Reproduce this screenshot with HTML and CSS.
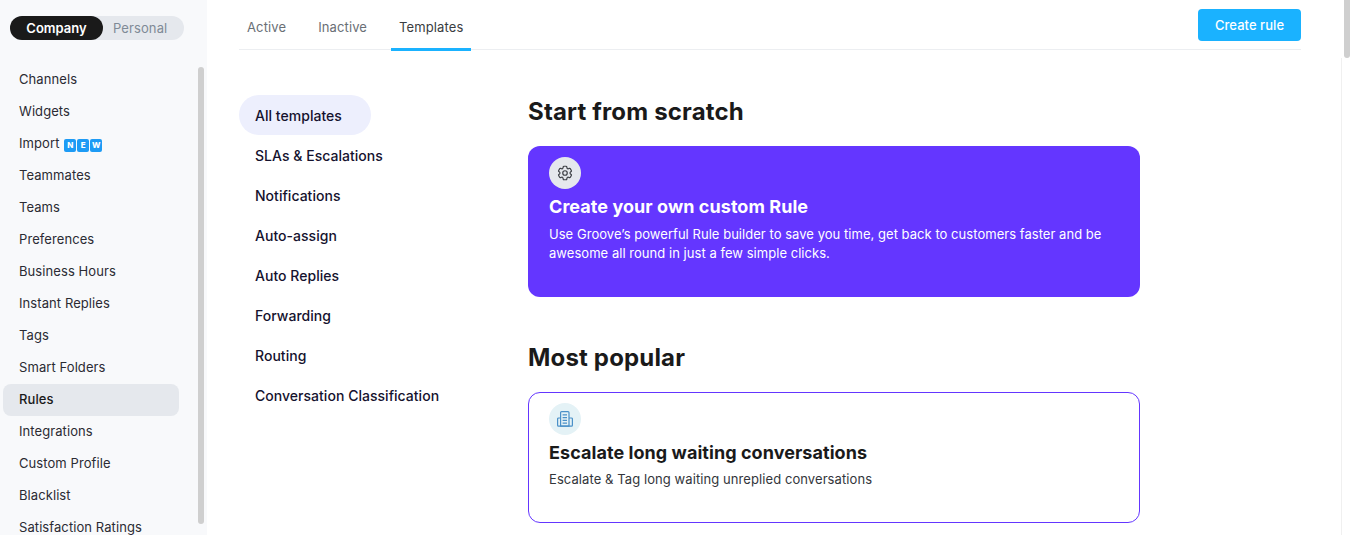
FILE: index.html
```html
<!DOCTYPE html>
<html lang="en">
<head>
<meta charset="utf-8">
<title>Rules</title>
<link rel="stylesheet" href="styles.css">
</head>
<body>
<div class="app">
  <aside class="sidebar">
    <div class="switch">
      <span class="switch-on">Company</span>
      <span class="switch-off">Personal</span>
    </div>
    <nav class="side-nav">
      <a class="side-item">Channels</a>
      <a class="side-item">Widgets</a>
      <a class="side-item">Import <span class="new"><b>N</b><b>E</b><b>W</b></span></a>
      <a class="side-item">Teammates</a>
      <a class="side-item">Teams</a>
      <a class="side-item">Preferences</a>
      <a class="side-item">Business Hours</a>
      <a class="side-item">Instant Replies</a>
      <a class="side-item">Tags</a>
      <a class="side-item">Smart Folders</a>
      <a class="side-item active">Rules</a>
      <a class="side-item">Integrations</a>
      <a class="side-item">Custom Profile</a>
      <a class="side-item">Blacklist</a>
      <a class="side-item">Satisfaction Ratings</a>
    </nav>
    <div class="side-thumb"></div>
  </aside>
  <main class="main">
    <header class="topbar">
      <div class="tabs">
        <a class="tab">Active</a>
        <a class="tab">Inactive</a>
        <a class="tab current">Templates</a>
      </div>
      <button class="create">Create rule</button>
    </header>
    <div class="content">
      <nav class="cats">
        <a class="cat selected">All templates</a>
        <a class="cat">SLAs &amp; Escalations</a>
        <a class="cat">Notifications</a>
        <a class="cat">Auto-assign</a>
        <a class="cat">Auto Replies</a>
        <a class="cat">Forwarding</a>
        <a class="cat">Routing</a>
        <a class="cat">Conversation Classification</a>
      </nav>
      <section class="templates">
        <h2 class="heading">Start from scratch</h2>
        <div class="card card-custom">
          <span class="badge badge-grey">
            <svg width="18" height="18" viewBox="0 0 24 24" fill="none" stroke="#3c3f45" stroke-width="1.6" stroke-linecap="round" stroke-linejoin="round"><path d="M9.594 3.94c.09-.542.56-.94 1.11-.94h2.593c.55 0 1.02.398 1.11.94l.213 1.281c.063.374.313.686.645.87.074.04.147.083.22.127.325.196.72.257 1.075.124l1.217-.456a1.125 1.125 0 0 1 1.37.49l1.296 2.247a1.125 1.125 0 0 1-.26 1.431l-1.003.827c-.293.241-.438.613-.43.992a7.723 7.723 0 0 1 0 .255c-.008.378.137.75.43.991l1.004.827c.424.35.534.955.26 1.43l-1.298 2.247a1.125 1.125 0 0 1-1.369.491l-1.217-.456c-.355-.133-.75-.072-1.076.124a6.47 6.47 0 0 1-.22.128c-.331.183-.581.495-.644.869l-.213 1.281c-.09.543-.56.94-1.11.94h-2.594c-.55 0-1.019-.398-1.11-.94l-.213-1.281c-.062-.374-.312-.686-.644-.87a6.52 6.52 0 0 1-.22-.127c-.325-.196-.72-.257-1.076-.124l-1.217.456a1.125 1.125 0 0 1-1.369-.49l-1.297-2.247a1.125 1.125 0 0 1 .26-1.431l1.004-.827c.292-.24.437-.613.43-.991a6.932 6.932 0 0 1 0-.255c.007-.38-.138-.751-.43-.992l-1.004-.827a1.125 1.125 0 0 1-.26-1.43l1.297-2.247a1.125 1.125 0 0 1 1.37-.491l1.216.456c.356.133.751.072 1.076-.124.072-.044.146-.086.22-.128.332-.183.582-.495.644-.869l.214-1.28Z"/><circle cx="12" cy="12" r="3"/></svg>
          </span>
          <h3 class="card-title">Create your own custom Rule</h3>
          <p class="card-text">Use Groove’s powerful Rule builder to save you time, get back to customers faster and be awesome all round in just a few simple clicks.</p>
        </div>
        <h2 class="heading heading-next">Most popular</h2>
        <div class="card card-outline">
          <span class="badge badge-blue">
            <svg width="16" height="16" viewBox="0 0 16 16" fill="none" stroke="#4a90c8" stroke-width="1.2" stroke-linejoin="round"><path d="M3.6 15.2V1.6c0-.6.4-1 1-1h6.4c.6 0 1 .4 1 1v13.6z"/><path d="M3.6 7H1.6c-.6 0-1 .4-1 1v6.2c0 .6.4 1 1 1h12.8c.6 0 1-.4 1-1V8c0-.6-.4-1-1-1H12"/><path d="M5.6 3.8h4.4M5.6 6.6h4.4M5.6 9.4h4.4M5.6 12.2h4.4" stroke-width="1.3"/></svg>
          </span>
          <h3 class="card-title">Escalate long waiting conversations</h3>
          <p class="card-text card-text-tight">Escalate &amp; Tag long waiting unreplied conversations</p>
        </div>
      </section>
    </div>
  </main>
  <div class="page-scroll"><div class="page-thumb"></div><div class="page-track"></div></div>
</div>
</body>
</html>
```
FILE: styles.css
```css
* { box-sizing: border-box; }
html, body { margin: 0; height: 100%; overflow: hidden; background: #fff; }
body { font-family: "Inter", "Liberation Sans", sans-serif; color: #1a1a1a; }
.app { display: flex; height: 535px; position: relative; overflow: hidden; }

.sidebar { width: 207px; flex: none; background: #f8f9fb; padding: 16px 0 0 3px; position: relative; overflow: hidden; }
.switch { display: flex; width: 174px; height: 24px; margin-left: 7px; border-radius: 12px; background: #e5e8ed; font-size: 13px; line-height: 24px; }
.switch-on { width: 93px; text-align: center; background: #1a1a1a; color: #fff; font-weight: 600; border-radius: 12px; }
.switch-off { flex: 1; padding-left: 10px; color: #7f8a96; letter-spacing: .1px; }
.side-nav { display: flex; flex-direction: column; margin-top: 24px; }
.side-item { display: block; width: 176px; height: 32px; flex: none; padding-left: 16px; font-size: 13px; line-height: 30px; letter-spacing: .08px; color: #2b2b33; border-radius: 8px; white-space: nowrap; }
.side-item.active { background: #e5e8ed; color: #1a1a1a; font-weight: 500; }
.new { display: inline-flex; gap: 1px; vertical-align: 0; margin-left: 1px; letter-spacing: 0; }
.new b { width: 12px; height: 13px; border-radius: 2px; background: #1d9bf5; color: #fff; font-size: 8px; line-height: 13px; font-weight: 800; text-align: center; }
.side-thumb { position: absolute; left: 198px; top: 67px; width: 6px; height: 457px; border-radius: 3px; background: #cfcfcf; }

.main { flex: 1; min-width: 0; padding: 0 51px 0 32px; }
.topbar { display: flex; justify-content: space-between; align-items: flex-start; height: 50px; border-bottom: 1px solid #eceef1; }
.tabs { display: flex; height: 51px; }
.tab { padding: 0 8px; margin-right: 16px; font-size: 13px; line-height: 54px; letter-spacing: .12px; color: #6a6f76; }
.tab.current { color: #3a3d42; border-bottom: 3px solid #1ab2ff; margin-right: 0; }
.create { width: 103px; height: 32px; margin-top: 9px; border: 0; border-radius: 4px; background: #1ab2ff; color: #fff; font: 500 13px "Inter", sans-serif; letter-spacing: .05px; }

.content { display: flex; padding-top: 45px; }
.cats { width: 289px; flex: none; display: flex; flex-direction: column; align-items: flex-start; }
.cat { height: 40px; flex: none; padding: 0 16px; font-size: 14px; font-weight: 500; line-height: 42px; letter-spacing: .03px; color: #15122e; border-radius: 20px; white-space: nowrap; }
.cat.selected { width: 132px; background: #edeffd; }
.templates { width: 612px; }
.heading { margin: 0; height: 33px; font-size: 24px; font-weight: 700; line-height: 33px; letter-spacing: .17px; color: #1a1a1a; }
.heading-next { margin-top: 44px; }
.card { height: 151px; margin-top: 18px; padding: 11px 21px 0; border-radius: 12px; }
.card-custom { background: #6436ff; color: #fff; }
.card-outline { border: 1px solid #6436ff; color: #1a1a1a; padding: 10px 20px 0; height: 131px; }
.badge { display: flex; align-items: center; justify-content: center; width: 32px; height: 32px; border-radius: 50%; }
.badge-grey { background: #e5e8ed; }
.badge-blue { background: #e4f2f6; }
.card-title { margin: 6px 0 0; font-size: 18px; line-height: 24px; font-weight: 700; letter-spacing: .06px; }
.card-text { margin: 6px 0 0; font-size: 13px; line-height: 19px; letter-spacing: .04px; }
.card-text-tight { margin-top: 5px; letter-spacing: .08px; color: #33363b; }

.page-scroll { position: absolute; right: 0; top: 0; width: 11px; height: 535px; display: flex; flex-direction: column; background: #fff; }
.page-thumb { flex: none; margin-left: 3px; width: 6px; height: 58px; background: #cfcfcf; border-radius: 0 0 3px 3px; }
.page-track { flex: 1; border-left: 1px solid #f0f0f0; }
```
